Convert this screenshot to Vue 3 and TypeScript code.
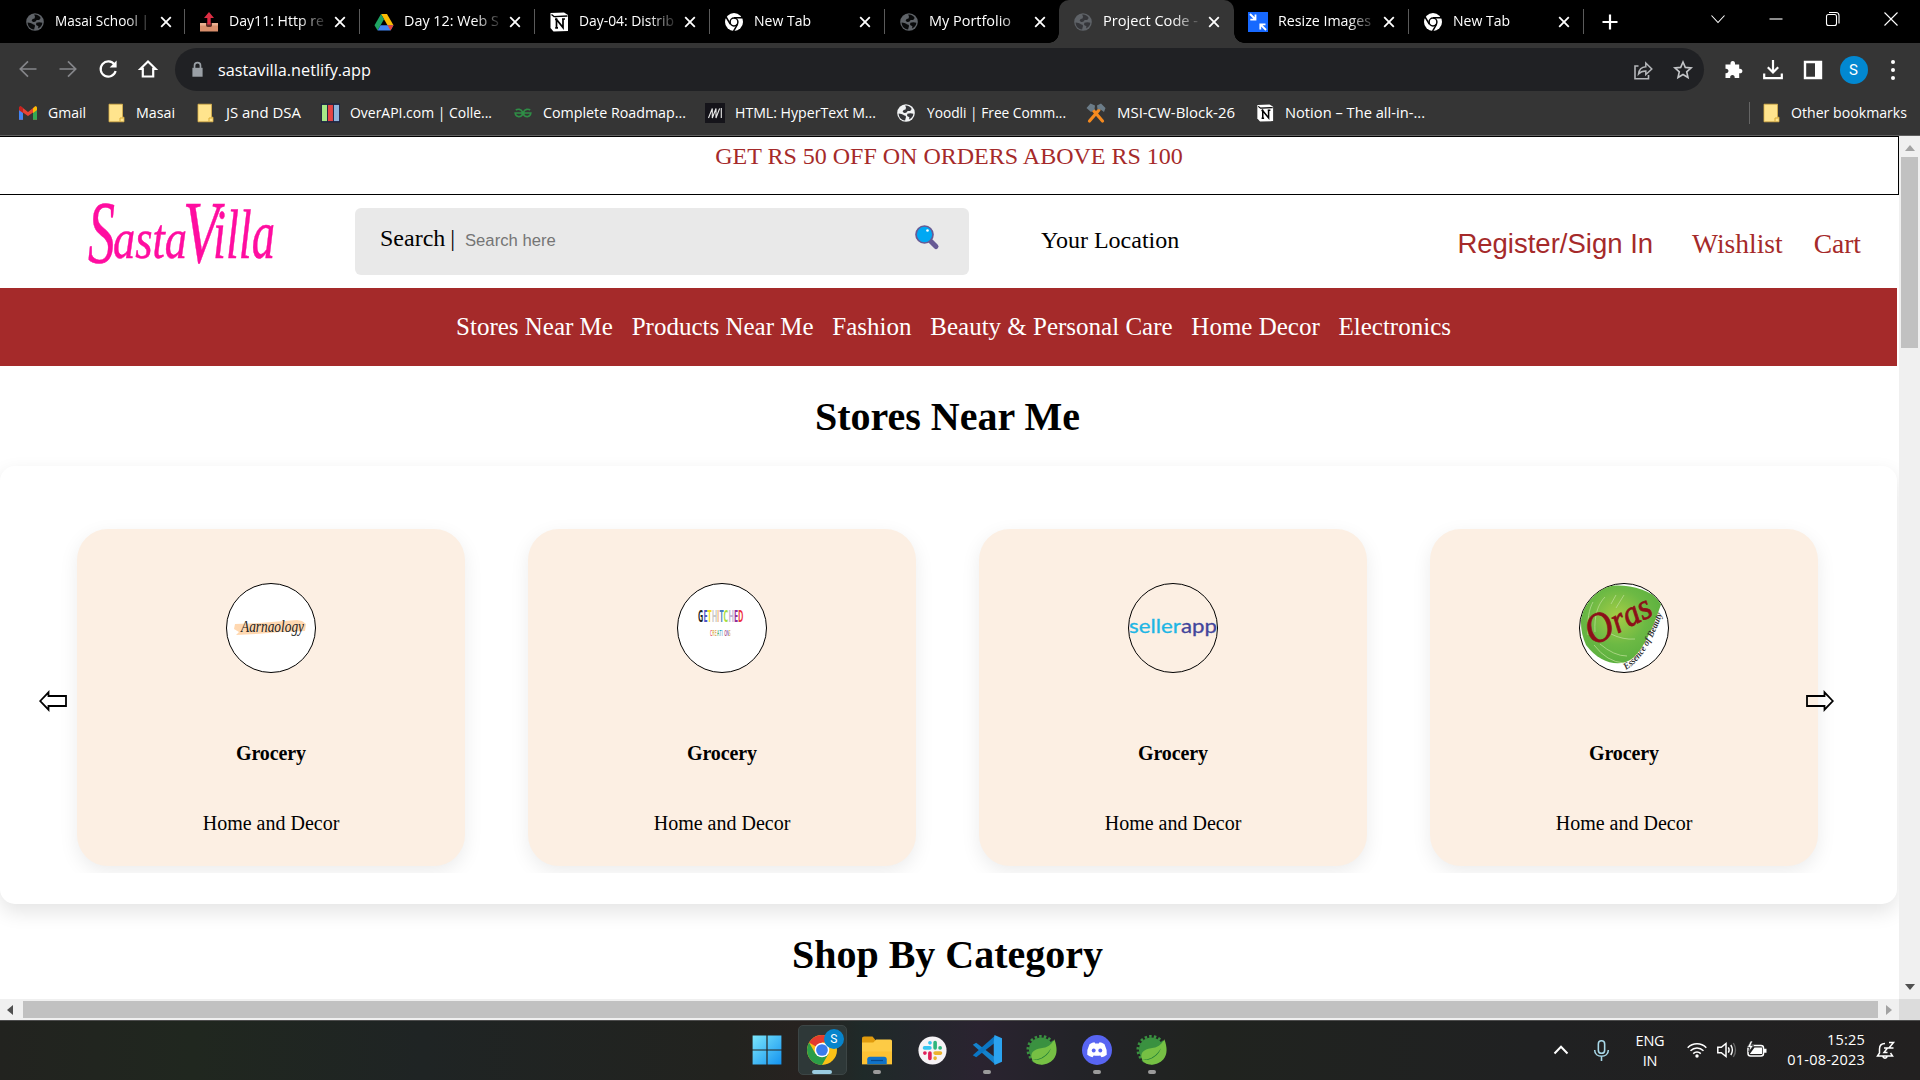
<script setup lang="ts">
interface Label { icon: string; text: string; w: number }
interface Bookmark extends Label { gap: number; iconW: number; pad: number }
interface Store { category: string; tagline: string; logo: string }

const globe = (land: string, sea: string): string =>
  `<circle cx="10" cy="10" r="8.8" fill="${land}"/><path d="M2.6 10.400 5.500 11c2 .4 1.800 1.400 3 1.600 1.600.3 1.800 1.300 1.200 2.500l-.6 2.500C5 17 2.700 14 2.600 10.400zM9.200 2.600c2.600-.3 5.400 1.200 6.500 3.400l-1.500 1.900-2.500.2-1.500 1.700-2.100.2-1.500-1.300 1-1.700 1.900-.5.5-1.700zM11.300 10.800l3.100-.6 3 .5c-.3 2.700-2 4.700-4.300 5.700l.3-2.200-2.300-1.300z" fill="${sea}"/>`
const leaf =
  `<circle cx="9.500" cy="9.800" r="8.200" fill="#3a9140"/><circle cx="9.500" cy="9.800" r="8.900" fill="none" stroke="#3a9140" stroke-width="1.900" stroke-dasharray="1.650 1.450"/><path d="M3.200 16C1.500 10.500 6.500 9.200 11 8.500c3.300-.5 5.600-2.500 7.200-5.700 2 5 2.300 10.200-.7 13.600-3.500 4-9.500 4.300-13 1.800z" fill="#76c044"/><path d="M3.500 16.300c5 .5 9.500-2.300 12.500-7.500C14 14 8.500 17.800 3.500 16.300z" fill="#1d7a37"/>`
const notion =
  `<path d="M1.500 1 15 .6 19 3v16L4.500 19.500 1.500 16z" fill="#fff"/><path d="M2.500 2.600 5 4.600 18.500 4" stroke="#000" stroke-width="1.300" fill="none"/><path d="M7.500 15.800V7.500l6.500 8V7.200M6 7.300h2.500M13 7h3M6.200 15.900h2.800" stroke="#000" stroke-width="1.700" fill="none"/>`
const folder =
  `<path d="M3 1.200h13.500v13H18V18.800H3z" fill="#ffe48d" stroke="#dcb34a" stroke-width=".8"/><path d="M14 18.500v-3.500h3.500" fill="none" stroke="#d9ab35"/>`

const icons: Record<string, string> = {
  globe: globe('#5f6368', '#08090a'),
  globeTab: globe('#5f6368', '#35363a'),
  globeWhite: globe('#f1f3f4', '#35363a'),
  leaf,
  notion,
  folder,
  inbox: `<path d="M1 11h18v8.500H1z" fill="#d98f6c"/><path d="M1 11h18v2.500H1z" fill="#eaaf90"/><path d="M7 11h6v2.500c0 2-6 2-6 0z" fill="#5b2a24"/><path d="M8.300 12.500V6H5L10 0l5 6h-3.300v6.500z" fill="#dd2e44"/>`,
  drive: `<path d="M7 2h6l6.500 11.200h-6z" fill="#fbbc04"/><path d="M7 2 10 7.200 3.600 18.400.5 13.200z" fill="#1fa463"/><path d="M6.600 13.200h12.900l-3 5.200H3.600z" fill="#4285f4"/><path d="M13.500 13.200h6l-3 5.200z" fill="#ea4335"/>`,
  chromeWhite: `<circle cx="10" cy="10" r="9" fill="#fff"/><circle cx="10" cy="10" r="3.900" fill="none" stroke="#000" stroke-width="1.500"/><path d="M10 5.800h8.300M6.300 12.200 2.100 5M13.600 12.200 9.600 19.200" stroke="#000" stroke-width="1.500"/>`,
  resize: `<path d="M0 0h20v20H0z" fill="#1769ff"/><path d="M2 2 7 7M7.500 2.500v5.200H2.300M18 18l-5-5M12.300 17.600v-5.200h5.200" stroke="#fff" stroke-width="1.800" fill="none"/>`,
  gmail: `<path d="M1 5v11.800h4V9.500L10 13l5-3.500v7.300h4V5L17.300 3.300 10 9 2.700 3.300z" fill="#ea4335"/><path d="M1 7v9.800h4V9.800z" fill="#4285f4"/><path d="M15 9.800v7h4V7z" fill="#34a853"/><path d="M15 5.200 17 3.500c1-.5 2 .3 2 1.500v2l-4 2.900z" fill="#fbbc04"/><path d="M1 7V5c0-1.200 1-2 2-1.500l2 1.700v4.700z" fill="#c5221f"/>`,
  overapi: `<path d="M0 0h20v20H0z" fill="#1c2340"/><path d="M1 1.500h5.300v17H1z" fill="#a6e886"/><path d="M7.300 1.500h5.300v17H7.300z" fill="#e64545"/><path d="M13.600 1.500h5.400v17h-5.400z" fill="#8fb4dc"/>`,
  gfg: `<path d="M9.300 10H2.200C2.500 13.800 7 14.800 9.200 12V8.500C8 6 4.800 5.700 2.800 7M10.700 10h7.100c-.3 3.800-4.800 4.800-7 2V8.500C12 6 15.200 5.700 17.200 7" fill="none" stroke="#2f8d46" stroke-width="1.700"/>`,
  mdn: `<path d="M0 0h20v20H0z" fill="#15141a"/><path d="M3.500 15 7.300 5.500V15L11 5.500V15L14.600 5.500M16.300 5v10" fill="none" stroke="#e8e8e8" stroke-width="1.100"/>`,
  tools: `<path d="m3.500 18 9.500-11M16.500 18 7 7" stroke="#f58a1f" stroke-width="3.200" stroke-linecap="round"/><path d="M.5 5 4.500.5l4.500 2L8.500 6.500 5 9zM11 2.500 15 .5 19.500 5 18 9l-3.500-2.500-3-.3z" fill="#6b7c88"/>`,
  back: `<path d="M18.500 10H2.500M10 2.300 2.300 10l7.700 7.700" fill="none" stroke="#85868a" stroke-width="1.700"/>`,
  forward: `<path d="M1.500 10h16M10 2.300l7.700 7.700-7.700 7.700" fill="none" stroke="#85868a" stroke-width="1.700"/>`,
  reload: `<path d="M16.500 5.700A7.600 7.600 0 1 0 17.600 12" fill="none" stroke="#fff" stroke-width="2.200"/><path d="M18.600 1.500v7h-7z" fill="#fff"/>`,
  home: `<path d="M10 2.500 2.500 9.800h2.300v7.700h10.400V9.800h2.300z" fill="none" stroke="#fff" stroke-width="2.200"/>`,
  lock: `<path d="M4 8h12v10.500H4z" fill="#9aa0a6"/><path d="M6.500 8.500V5.300c0-4.400 7-4.400 7 0v3.200" fill="none" stroke="#9aa0a6" stroke-width="2"/>`,
  share: `<path d="M5.500 6H2v12.800h13.500V15" fill="none" stroke="#b4b6b9" stroke-width="1.600"/><path d="M5.500 14C6 9.500 8.500 7 12.800 6.700V3l6 6-6 5.500V11C9.500 11 7.500 11.700 5.500 14z" fill="none" stroke="#b4b6b9" stroke-width="1.500"/>`,
  star: `<path d="m10 2 2.300 5.400 5.800.5-4.400 3.900 1.300 5.700L10 14.500l-5 3 1.300-5.700L1.900 7.900l5.800-.5z" fill="none" stroke="#c3c5c8" stroke-width="1.600"/>`,
  puzzle: `<path d="M3.500 4.500h4c-.8-4.600 5.300-4.600 4.500 0h4.200v4.300c4.300-.7 4.300 5.200 0 4.500V18h-4.500c.6-4-5.200-4-4.500 0H2.500v-4.700c4 .5 4-5 0-4.500V4.500z" fill="#fff"/>`,
  download: `<path d="M10 0v12M4.800 7.200 10 12.500l5.200-5.300M1.200 13.500v4.700h17.600v-4.700" fill="none" stroke="#fff" stroke-width="2.200"/>`,
  panel: `<path d="M2 2h16v16H2z" fill="none" stroke="#fff" stroke-width="2.400"/><path d="M12 2h6v16h-6z" fill="#fff"/>`,
  windows: `<defs><linearGradient id="wg" x1="0" y1="0" x2="1" y2="1"><stop offset="0" stop-color="#7be6fb"/><stop offset="1" stop-color="#1493f0"/></linearGradient></defs><path d="M.4.400h9.200v9.200H.4zM10.400.4h9.200v9.200h-9.200zM.4 10.400h9.200v9.200H.4zM10.400 10.400h9.200v9.200h-9.200z" fill="url(#wg)"/>`,
  chrome: `<circle cx="10" cy="10" r="10" fill="#fbc116"/><path d="M10 10 1.340 5A10 10 0 0 1 18.660 5H10z" fill="#e33b2e"/><path d="M1.340 5A10 10 0 0 0 10 20l4.330-7.500L10 10 5.670 12.500z" fill="#2b9d48"/><path d="M10 5h8.660L14 12.500z" fill="#fbc116"/><circle cx="10" cy="10" r="4.900" fill="#fff"/><circle cx="10" cy="10" r="3.900" fill="#3a7cec"/>`,
  explorer: `<path d="M0 2.500C0 1.500.5 1 1.500 1H7l2.300 2.600v3H0z" fill="#e09b0d"/><path d="M0 5h7.500l2-2H19q1 0 1 1v15.500H0z" fill="#fdcb45"/><path d="M0 11h20v8.500H0z" fill="#fbbd2a" opacity=".6"/><path d="M3.500 19.500v-3.300q0-1.700 1.700-1.700h9.600q1.700 0 1.700 1.700v3.300z" fill="#1073c8"/><path d="M6 17h8" stroke="#07498d" stroke-width=".8"/>`,
  slack: `<circle cx="10" cy="10" r="9.700" fill="#f6f3f6"/><g stroke-width="2.500" stroke-linecap="round"><path d="M4.500 8.200h3.700M8.300 4.700h-.1" stroke="#36c5f0"/><path d="M11.800 4.500v3.700M15.300 8.200h-.1" stroke="#2eb67d"/><path d="M15.500 11.800h-3.700M11.800 15.400v-.1" stroke="#ecb22e"/><path d="M8.200 15.500v-3.700M4.700 11.800h.1" stroke="#e01e5a"/></g>`,
  vscode: `<path d="M.5 6.500 2.800 5.200 15.500 15v4.700z" fill="#1482cc"/><path d="m.5 13.500 2.300 1.300L15.500 5V.3z" fill="#0b76c4"/><path d="M15 0l5 2.200v15.600L15 20l-.5-4V4z" fill="#2ba3f0"/>`,
  discord: `<circle cx="10" cy="10" r="10" fill="#5865f2"/><path d="M5 6.200q2-1.200 3.300-1.300l.5.8h2.400l.5-.8q1.500.1 3.300 1.300 1.800 3.500 1.500 7-1.700 1.400-3.500 1.700l-.8-1.300q-2.200.5-4.400 0L7 14.900q-2-.4-3.500-1.700-.3-3.500 1.500-7z" fill="#fff"/><circle cx="7.800" cy="10.300" r="1.300" fill="#5865f2"/><circle cx="12.200" cy="10.300" r="1.300" fill="#5865f2"/>`,
  up: `<path d="m3.500 13.500 6.500-6.700 6.500 6.700" fill="none" stroke="#fff" stroke-width="2"/>`,
  mic: `<rect x="7" y=".7" width="6" height="12" rx="3" fill="none" stroke="#a8d8e8" stroke-width="1.500"/><path d="M3.500 9.500c0 8 13 8 13 0M10 15.700V20" fill="none" stroke="#a8d8e8" stroke-width="1.500"/>`,
  wifi: `<g fill="none" stroke="#fff" stroke-width="1.500"><path d="M.7 7.700c5.200-5.300 13.400-5.300 18.600 0M3.500 10.700c3.700-3.700 9.300-3.700 13 0M6.200 13.600c2.200-2.200 5.400-2.200 7.600 0"/></g><circle cx="10" cy="16" r="1.700" fill="#fff"/>`,
  volume: `<path d="M.8 7.300h3.500L9 3.500v13l-4.700-3.800H.8z" fill="none" stroke="#fff" stroke-width="1.500"/><path d="M11.300 7.300q1.700 2.700 0 5.400M13.800 5q3.200 5 0 10" fill="none" stroke="#fff" stroke-width="1.400"/><path d="M16.300 3q4.400 7 0 14" fill="none" stroke="#666" stroke-width="1.400"/>`,
  battery: `<rect x="1" y="5.500" width="15.500" height="10.500" rx="2.500" fill="none" stroke="#fff" stroke-width="1.500"/><path d="M3 13.700 7.500 7.500H15v6.500H3zM17 8.800h2.500v4H17z" fill="#fff"/><path d="M3.500 1 .3 7.500h2.500L1.800 12 6.500 5.500H3.800L5.800 1z" fill="#fff" stroke="#202122" stroke-width=".7"/>`,
  bell: `<path d="M10 3.500C6 3.500 4.500 6 4.500 9v4L2.500 16h15l-2-3M7.800 16.500q2.200 3.500 4.400 0" fill="none" stroke="#fff" stroke-width="1.500"/><path d="M9 8h3.500L9 12.500h3.500M14 2.500h4.500L14 8h4.500" fill="none" stroke="#fff" stroke-width="1.500"/>`,
}

const tabs: Label[] = [
  { icon: 'globe', text: 'Masai School |', w: 94 },
  { icon: 'inbox', text: 'Day11: Http re', w: 95 },
  { icon: 'drive', text: 'Day 12: Web S', w: 95 },
  { icon: 'notion', text: 'Day-04: Distrib', w: 95 },
  { icon: 'chromeWhite', text: 'New Tab', w: 57 },
  { icon: 'globe', text: 'My Portfolio', w: 82 },
  { icon: 'globeTab', text: 'Project Code -', w: 95 },
  { icon: 'resize', text: 'Resize Images', w: 93 },
  { icon: 'chromeWhite', text: 'New Tab', w: 57 },
]
const activeTab = 6

const bookmarks: Bookmark[] = [
  { icon: 'gmail', text: 'Gmail', w: 38, gap: 18, iconW: 20, pad: 10 },
  { icon: 'folder', text: 'Masai', w: 39, gap: 20, iconW: 20, pad: 10 },
  { icon: 'folder', text: 'JS and DSA', w: 75, gap: 20, iconW: 20, pad: 11 },
  { icon: 'overapi', text: 'OverAPI.com | Colle...', w: 142, gap: 20, iconW: 19, pad: 10 },
  { icon: 'gfg', text: 'Complete Roadmap...', w: 143, gap: 21, iconW: 20, pad: 10 },
  { icon: 'mdn', text: 'HTML: HyperText M...', w: 141, gap: 19, iconW: 20, pad: 10 },
  { icon: 'globeWhite', text: 'Yoodli | Free Comm...', w: 139, gap: 20, iconW: 20, pad: 11 },
  { icon: 'tools', text: 'MSI-CW-Block-26', w: 118, gap: 20, iconW: 20, pad: 11 },
  { icon: 'notion', text: 'Notion – The all-in-...', w: 140, gap: 21, iconW: 18, pad: 11 },
]

const navLinks: string[] = ['Stores Near Me', 'Products Near Me', 'Fashion', 'Beauty & Personal Care', 'Home Decor', 'Electronics']

const stores: Store[] = [
  { category: 'Grocery', tagline: 'Home and Decor', logo: 'aarnaology' },
  { category: 'Grocery', tagline: 'Home and Decor', logo: 'gethitched' },
  { category: 'Grocery', tagline: 'Home and Decor', logo: 'sellerapp' },
  { category: 'Grocery', tagline: 'Home and Decor', logo: 'oras' },
]
const hitched: [string, string, number][] = [
  ['G', '#222', 0], ['E', '#4a56c8', 12], ['T', '#f5df1e', 21], ['H', '#c9c9c9', 30], ['I', '#f5b87a', 42],
  ['T', '#4a7fc0', 47], ['C', '#a6dc3c', 56], ['H', '#c3b3d3', 67], ['E', '#8f2f9c', 79], ['D', '#ee3344', 88],
]
const creations: [string, string][] = [
  ['C', '#e0507a'], ['R', '#d8b050'], ['E', '#e8b060'], ['A', '#40b060'], ['T', '#30a8c0'],
  ['I', '#50a0d0'], ['O', '#b05080'], ['N', '#8060c0'], ['S', '#e8c060'],
]

const apps: { icon: string; size: number; running: boolean }[] = [
  { icon: 'windows', size: 30, running: false },
  { icon: 'chrome', size: 30, running: true },
  { icon: 'explorer', size: 30, running: true },
  { icon: 'slack', size: 29, running: false },
  { icon: 'vscode', size: 30, running: true },
  { icon: 'leaf', size: 30, running: false },
  { icon: 'discord', size: 30, running: true },
  { icon: 'leaf', size: 30, running: true },
]
</script>

<template>
  <div class="screen">
    <div class="tabstrip">
      <div v-for="(t, i) in tabs" :key="i" class="tab" :class="{ active: i === activeTab, plain: i === activeTab - 1 }">
        <svg class="favicon" viewBox="0 0 20 20" v-html="icons[t.icon]" />
        <span class="tab-label">
          <svg class="label" :width="t.w" height="22"><text x="0" y="15" :textLength="t.w" lengthAdjust="spacingAndGlyphs">{{ t.text }}</text></svg>
        </span>
        <svg class="close" viewBox="0 0 12 12"><path d="m1.200 1.200 9.600 9.600m0-9.600-9.600 9.600" stroke="#fff" stroke-width="1.800" /></svg>
      </div>
      <svg class="plus" viewBox="0 0 16 16"><path d="M8 .5v15M.5 8h15" stroke="#fff" stroke-width="2.200" /></svg>
      <div class="window-controls">
        <svg viewBox="0 0 16 16"><path d="m1.500 4.500 6.500 7 6.500-7" /></svg>
        <svg viewBox="0 0 16 16"><path d="M1.500 8h13" /></svg>
        <svg viewBox="0 0 16 16"><rect x="1.500" y="3.500" width="10" height="11" rx="2" /><path d="M4 1.500h7q3 0 3 3v8" /></svg>
        <svg viewBox="0 0 16 16"><path d="m1.500 1.500 13 13m0-13-13 13" /></svg>
      </div>
    </div>

    <div class="toolbar">
      <svg v-for="n in ['back', 'forward', 'reload', 'home']" :key="n" class="nav-icon" viewBox="0 0 20 20" v-html="icons[n]" />
      <div class="omnibox">
        <svg class="lock" viewBox="0 0 20 20" v-html="icons.lock" />
        <svg class="label url" width="154" height="24"><text x="0" y="18" textLength="153" lengthAdjust="spacingAndGlyphs">sastavilla.netlify.app</text></svg>
        <svg class="box-icon" viewBox="0 0 20 20" v-html="icons.share" />
        <svg class="box-icon" viewBox="0 0 20 20" v-html="icons.star" />
      </div>
      <div class="actions">
        <svg v-for="n in ['puzzle', 'download', 'panel']" :key="n" viewBox="0 0 20 20" v-html="icons[n]" />
        <span class="avatar">S</span>
        <span class="dots"><i /><i /><i /></span>
      </div>
    </div>

    <div class="bookmarks">
      <div v-for="b in bookmarks" :key="b.text" class="bookmark" :style="{ marginLeft: b.gap + 'px' }">
        <svg :width="b.iconW" height="20" viewBox="0 0 20 20" v-html="icons[b.icon]" />
        <svg class="label" :width="b.w" height="22" :style="{ marginLeft: b.pad + 'px' }"><text x="0" y="16" :textLength="b.w" lengthAdjust="spacingAndGlyphs">{{ b.text }}</text></svg>
      </div>
      <div class="bookmark other">
        <svg width="20" height="20" viewBox="0 0 20 20" v-html="icons.folder" />
        <svg class="label" width="116" height="22"><text x="0" y="16" textLength="116" lengthAdjust="spacingAndGlyphs">Other bookmarks</text></svg>
      </div>
    </div>

    <div class="viewport">
      <main class="page">
        <div class="promo">GET RS 50 OFF ON ORDERS ABOVE RS 100</div>
        <header class="header">
          <svg class="brand" width="196" height="80">
            <text y="58"><tspan class="cap" x="2" dy="4" textLength="27" lengthAdjust="spacingAndGlyphs">S</tspan><tspan x="27" dy="-4" textLength="74" lengthAdjust="spacingAndGlyphs">asta</tspan><tspan class="cap" x="97" dy="4" textLength="36" lengthAdjust="spacingAndGlyphs">V</tspan><tspan class="tail" x="127" dy="-4" textLength="62" lengthAdjust="spacingAndGlyphs">illa</tspan></text>
          </svg>
          <div class="search">
            <span class="search-label">Search<span class="bar">|</span></span>
            <span class="search-hint">Search here</span>
            <svg class="glass" viewBox="0 0 24 24">
              <path d="m15.500 16 5.500 5.500" stroke="#675a94" stroke-width="5" stroke-linecap="round" />
              <circle cx="9.500" cy="9.500" r="8.500" fill="#00a8f3" stroke="#675a94" stroke-width="1.700" />
              <circle cx="12.500" cy="5.500" r="1.300" fill="#fff" />
            </svg>
          </div>
          <span class="location">Your Location</span>
          <div class="account">
            <span class="signin">Register/Sign In</span>
            <span class="wishlist">Wishlist</span>
            <span>Cart</span>
          </div>
        </header>
        <nav class="nav"><span v-for="l in navLinks" :key="l">{{ l }}</span></nav>

        <h1>Stores Near Me</h1>
        <section class="carousel">
          <div class="track">
            <article v-for="(s, i) in stores" :key="i" class="card">
              <div class="logo" :class="s.logo">
                <svg v-if="s.logo === 'aarnaology'" viewBox="0 0 88 88">
                  <path d="m8 40 24-1 38-3 5 1 4 3-1 7-24 1-25 2-20 1 3-3-5-3z" fill="#ffd8b1" />
                  <text x="14" y="48" font-family="Liberation Serif, serif" font-style="italic" font-size="16" fill="#222" textLength="63" lengthAdjust="spacingAndGlyphs">Aarnaology</text>
                </svg>
                <svg v-else-if="s.logo === 'gethitched'" viewBox="0 0 88 88">
                  <g transform="translate(20 37.500) scale(.455 1)" font-family="Open Sans, sans-serif" font-weight="700" font-size="16">
                    <text><tspan v-for="(c, k) in hitched" :key="k" :x="c[2]" :fill="c[1]">{{ c[0] }}</tspan></text>
                  </g>
                  <g transform="translate(32 52) scale(.38 1)" font-family="Open Sans, sans-serif" font-weight="600" font-size="9">
                    <text><tspan v-for="(c, k) in creations" :key="k" :x="k * 6.200" :fill="c[1]">{{ c[0] }}</tspan></text>
                  </g>
                </svg>
                <svg v-else-if="s.logo === 'sellerapp'" viewBox="0 0 88 88">
                  <text x="0" y="48.500" font-family="Lato, sans-serif" font-size="20" fill="#1fb6e4" stroke="#1fb6e4" stroke-width=".3" textLength="52" lengthAdjust="spacingAndGlyphs">seller</text>
                  <text x="52" y="48.500" font-family="Lato, sans-serif" font-size="20" fill="#43459b" stroke="#43459b" stroke-width=".3" textLength="36" lengthAdjust="spacingAndGlyphs">app</text>
                </svg>
                <svg v-else viewBox="0 0 88 88">
                  <defs>
                    <radialGradient id="oras" cx=".45" cy=".4" r=".65"><stop offset="0" stop-color="#a6cd45" /><stop offset=".55" stop-color="#6cb944" /><stop offset="1" stop-color="#58ae3e" /></radialGradient>
                    <path id="curve" d="M46 86C62 76 73 56 83 28" />
                  </defs>
                  <path d="M30 2C50 0 68 6 82 17 76 36 66 62 53 74 41 84 20 80 6 61-6 35 4 5 30 2z" fill="url(#oras)" />
                  <path d="M8 51C7 36 9 25 13 18M15 48C14 32 18 20 25 13M31 20l5-9M36 24 44 11M20 60q14 12 27 12M14 61q13 17 30 18M31 50q12 6 24 5" fill="none" stroke="#b8dc91" stroke-width=".8" />
                  <g transform="translate(13 62) rotate(-27)" font-family="Liberation Serif, serif" font-style="italic" font-size="42" fill="#8c1019" stroke="#8c1019" stroke-width=".8">
                    <text textLength="69" lengthAdjust="spacingAndGlyphs">O<tspan font-size="36">ras</tspan></text>
                  </g>
                  <text font-family="Liberation Serif, serif" font-style="italic" font-weight="bold" font-size="9.500" fill="#333" textLength="68" lengthAdjust="spacingAndGlyphs"><textPath href="#curve" textLength="68" lengthAdjust="spacingAndGlyphs">Essence of Beauty</textPath></text>
                </svg>
              </div>
              <b>{{ s.category }}</b>
              <p>{{ s.tagline }}</p>
            </article>
          </div>
          <svg class="arrow prev" viewBox="0 0 28 20"><path d="M1.200 10 9.500 1.300V5H27v10H9.500v3.700z" /></svg>
          <svg class="arrow next" viewBox="0 0 28 20"><path d="M26.800 10 18.500 1.300V5H1v10h17.500v3.700z" /></svg>
        </section>
        <h1>Shop By Category</h1>
      </main>
      <div class="vbar">
        <svg class="tri" viewBox="0 0 10 6"><path d="M5 0l5 6H0z" fill="#a3a3a3" /></svg>
        <div class="vthumb" />
        <svg class="tri down" viewBox="0 0 10 6"><path d="M0 0h10L5 6z" fill="#505050" /></svg>
      </div>
    </div>
    <div class="hbar">
      <svg class="htri" viewBox="0 0 6 10"><path d="M6 0v10L0 5z" fill="#505050" /></svg>
      <div class="hthumb" />
      <svg class="htri right" viewBox="0 0 6 10"><path d="M0 0v10l6-5z" fill="#a3a3a3" /></svg>
      <div class="corner" />
    </div>

    <footer class="taskbar">
      <div class="apps">
        <div v-for="(a, i) in apps" :key="i" class="app" :class="{ current: a.icon === 'chrome', running: a.running }">
          <svg :width="a.size" :height="a.size" viewBox="0 0 20 20" v-html="icons[a.icon]" />
          <span v-if="a.icon === 'chrome'" class="badge">S</span>
        </div>
      </div>
      <div class="tray">
        <svg class="t-up" viewBox="0 0 20 20" v-html="icons.up" />
        <svg class="t-mic" viewBox="0 0 20 20" v-html="icons.mic" />
        <div class="lang"><span>ENG</span><span>IN</span></div>
        <svg class="t-icon" viewBox="0 0 20 20" v-html="icons.wifi" />
        <svg class="t-icon" viewBox="0 0 20 20" v-html="icons.volume" />
        <svg class="t-icon" viewBox="0 0 20 20" v-html="icons.battery" />
        <div class="clock"><span>15:25</span><span>01-08-2023</span></div>
        <svg class="t-bell" viewBox="0 0 20 20" v-html="icons.bell" />
      </div>
    </footer>
  </div>
</template>

<style>
body { margin: 0; overflow: hidden; }
</style>

<style scoped>
.screen { width: 1920px; height: 1080px; display: flex; flex-direction: column; overflow: hidden; background: #fff; }
svg { display: block; flex: none; overflow: visible; }
.label text { font: 14.5px "Open Sans", sans-serif; fill: #fff; }

.tabstrip { height: 43px; flex: none; background: #000; display: flex; align-items: center; padding-left: 10.600px; }
.tab { width: 174.800px; height: 43px; flex: none; box-sizing: border-box; display: flex; align-items: center; padding-left: 14px; position: relative; }
.tab:not(.active):not(.plain)::after { content: ""; position: absolute; right: 0; top: 9px; width: 1px; height: 25px; background: #5b5b5b; }
.tab.active { background: #353535; border-radius: 10px 10px 0 0; }
.tab.active::before { content: ""; position: absolute; left: -10px; right: -10px; bottom: 0; height: 10px;
  background: radial-gradient(circle at 0 0, transparent 9.5px, #353535 10px) left / 10px 10px no-repeat, radial-gradient(circle at 100% 0, transparent 9.5px, #353535 10px) right / 10px 10px no-repeat; }
.favicon { width: 20px; height: 20px; }
.tab-label { width: 96px; margin-left: 10px; -webkit-mask-image: linear-gradient(90deg, #000 70px, transparent 100px); mask-image: linear-gradient(90deg, #000 70px, transparent 100px); }
.close { width: 12px; height: 12px; margin-left: 9px; }
.plus { width: 16px; height: 16px; margin-left: 18.500px; }
.window-controls { display: flex; gap: 41.500px; margin-left: 92px; padding-bottom: 6px; }
.window-controls svg { width: 16px; height: 16px; fill: none; stroke: #fff; stroke-width: 1.100; }

.toolbar { height: 48px; padding-top: 5px; box-sizing: border-box; flex: none; background: #353535; display: flex; padding-left: 17.500px; }
.nav-icon { width: 20px; height: 20px; margin: 11px 20px 0 0; }
.omnibox { width: 1529px; height: 43px; margin-left: -2.500px; box-sizing: border-box; border-radius: 22px; background: #202124; display: flex; align-items: center; padding-left: 13.500px; }
.lock { width: 17px; height: 17px; }
.url { margin-left: 12px; margin-right: auto; }
.url text { font-size: 16.500px; }
.box-icon { width: 20px; height: 20px; margin-right: 20px; }
.box-icon:last-child { margin-right: 11.500px; }
.actions { display: flex; align-items: center; height: 43px; margin-left: 18.500px; }
.actions svg { width: 20px; height: 20px; margin-right: 20px; }
.avatar { width: 28px; height: 28px; border-radius: 50%; background: #0288d1; color: #fff; font: 15px/28px Roboto, sans-serif; text-align: center; margin-left: -3px; }
.dots { display: flex; flex-direction: column; gap: 4px; margin-left: 23px; }
.dots i { width: 4px; height: 4px; border-radius: 50%; background: #fff; }

.bookmarks { height: 45px; flex: none; box-sizing: border-box; border-bottom: 1px solid #606060; background: #353535; display: flex; align-items: center; }
.bookmark { display: flex; align-items: center; flex: none; }
.other { margin-left: auto; margin-right: 13px; padding-left: 11px; border-left: 1px solid #656565; gap: 10px; }

.viewport { height: 863px; flex: none; display: flex; overflow: hidden; }
.page { width: 1899px; flex: none; overflow: hidden; font-family: "Liberation Serif", serif; color: #000; }
.promo { height: 59px; box-sizing: border-box; border: 1px solid #000; border-left: 0; padding-top: 6px; text-align: center; color: brown; font-size: 24px; line-height: 27px; }
.header { height: 93px; display: flex; align-items: flex-start; }
.brand { margin: 5px 0 0 86px; }
.brand text { font: italic 58px "Liberation Serif", serif; fill: #ff0da0; stroke: #ff0da0; stroke-width: .5; }
.brand .cap { font-size: 88px; }
.brand .tail { font-size: 70px; }
.search { width: 614px; height: 67px; margin: 13px 0 0 73px; border-radius: 6px; background: #e9e9e9; display: flex; align-items: flex-start; box-sizing: border-box; padding: 16px 30px 0 25px; }
.search-label { width: 77px; font-size: 24px; line-height: 28px; }
.bar { margin-left: 5px; }
.search-hint { font: 16.670px/20px "Liberation Sans", sans-serif; color: #757575; margin: 7px auto 0 8px; }
.glass { width: 24px; height: 24px; margin-top: 1px; }
.location { margin: 31px 0 0 72px; font-size: 24px; line-height: 28px; }
.account { margin: 33px 0 0 auto; padding-right: 38px; display: flex; color: brown; font-size: 27.500px; line-height: 32px; }
.signin { font-family: "Liberation Sans", sans-serif; margin-right: 39px; }
.wishlist { margin-right: 31px; }
.nav { width: 1897px; height: 78px; box-sizing: border-box; padding: 0 0 1px 10px; background: #a52a2a; color: #fff; display: flex; justify-content: center; align-items: center; gap: 18.750px; font-size: 25px; }
h1 { width: 1895px; height: 100px; margin: 0; padding-top: 1px; box-sizing: border-box; font-size: 40px; line-height: 100px; text-align: center; }
.carousel { width: 1897px; height: 438px; border-radius: 15px; position: relative; background: #fff; box-shadow: 0 8px 20px rgba(0, 0, 0, .11); }
.track { display: flex; gap: 63px; padding: 63px 77px 0; height: 344px; overflow: hidden; }
.card { width: 388px; height: 337px; flex: none; box-sizing: border-box; border-radius: 31px; background: #fcefe3; box-shadow: 0 6px 19px rgba(0, 0, 0, .08); display: flex; flex-direction: column; align-items: center; padding-top: 54px; font-size: 20px; line-height: 24px; }
.logo { width: 90px; height: 90px; box-sizing: border-box; border: 1px solid #000; border-radius: 50%; overflow: hidden; background: #fff; }
.logo.sellerapp { background: none; }
.card b { margin-top: 68px; font-size: 20px; letter-spacing: -.1px; }
.card p { margin: 46px 0 0; }
.arrow { position: absolute; top: 225px; width: 28px; height: 20px; fill: #fff; stroke: #000; stroke-width: 1.800; }
.prev { left: 38.500px; }
.next { left: 1806px; fill: none; }

.vbar { width: 21px; background: #f0f0f0; display: flex; flex-direction: column; align-items: center; }
.tri { width: 10px; height: 6px; margin-top: 9px; }
.vthumb { width: 17px; height: 191px; margin-top: 6px; background: #c1c1c1; }
.down { margin: auto 0 9px; }
.hbar { height: 21px; flex: none; background: #f0f0f0; display: flex; align-items: center; }
.htri { width: 6px; height: 10px; margin-left: 7px; }
.hthumb { width: 1855px; height: 17px; margin-left: 10px; background: #c1c1c1; }
.right { margin-left: 8px; }
.corner { width: 21px; height: 21px; margin-left: auto; background: #dcdcdc; }

.taskbar { height: 60px; flex: none; box-sizing: border-box; border-top: 1px solid #4d4d4d; color: #fff; display: flex; background: linear-gradient(90deg, #22231f, #20271f 10%, #1f2424 22%, #22231f 38%, #272220 42%, #1f2a29 45%, #2a2330 51%, #232328 56%, #20231f 63%, #202122 80%, #222020); }
.apps { display: flex; gap: 6px; margin-left: 742px; padding-top: 4px; }
.app { width: 49px; height: 50px; box-sizing: border-box; display: flex; align-items: center; justify-content: center; position: relative; left: .7px; border-radius: 5px; }
.current { background: #2e3838; border: 1px solid #3c4545; }
.running::after { content: ""; position: absolute; bottom: 1px; width: 8px; height: 4px; border-radius: 2px; background: #9b9b9b; }
.current.running::after { bottom: 0; width: 20px; background: #9acbe0; }
.badge { position: absolute; left: 25px; top: 3px; width: 20px; height: 20px; border-radius: 50%; background: #0784cc; font: 12px/20px Roboto, sans-serif; text-align: center; }
.tray { display: flex; align-items: center; margin-left: auto; padding-right: 25px; font: 15px/20px "Open Sans", sans-serif; height: 58px; }
.lang, .clock { display: flex; flex-direction: column; }
.lang { width: 40px; align-items: center; font-size: 14.500px; letter-spacing: -.2px; margin: 1px 17px 0 18px; }
.clock { width: 84px; align-items: flex-end; font-size: 14.500px; letter-spacing: .2px; margin-left: 4px; }
.t-up { width: 20px; height: 20px; margin-right: 20px; }
.t-mic { width: 21px; height: 21px; }
.t-icon { width: 20px; height: 20px; margin-right: 10px; }
.t-bell { width: 20px; height: 20px; margin-left: 10px; }
</style>
